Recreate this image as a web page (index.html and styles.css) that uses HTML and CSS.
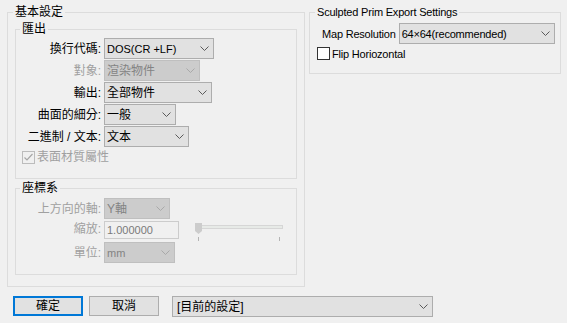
FILE: index.html
```html
<!DOCTYPE html>
<html lang="zh-Hant">
<head>
    <meta charset="UTF-8"/>
    <title>匯出設定</title>
    <link rel="stylesheet" href="styles.css">
</head>
<body>
<div class="dialog">
    <div class="top">
        <fieldset class="basic">
            <legend>基本設定</legend>

            <fieldset class="group export">
                <legend>匯出</legend>
                <div class="row">
                    <span class="label">換行代碼:</span>
                    <div class="combo w110">
                        <span class="latin">DOS(CR +LF)</span>
                        <svg class="chev" width="9" height="5" viewBox="0 0 9 5"><path d="M0.5 0.5 L4.5 4.5 L8.5 0.5"/></svg>
                    </div>
                </div>
                <div class="row off">
                    <span class="label">對象:</span>
                    <div class="combo w96">
                        <span>渲染物件</span>
                        <svg class="chev" width="9" height="5" viewBox="0 0 9 5"><path d="M0.5 0.5 L4.5 4.5 L8.5 0.5"/></svg>
                    </div>
                </div>
                <div class="row">
                    <span class="label">輸出:</span>
                    <div class="combo w108">
                        <span>全部物件</span>
                        <svg class="chev" width="9" height="5" viewBox="0 0 9 5"><path d="M0.5 0.5 L4.5 4.5 L8.5 0.5"/></svg>
                    </div>
                </div>
                <div class="row">
                    <span class="label">曲面的細分:</span>
                    <div class="combo w72">
                        <span>一般</span>
                        <svg class="chev" width="9" height="5" viewBox="0 0 9 5"><path d="M0.5 0.5 L4.5 4.5 L8.5 0.5"/></svg>
                    </div>
                </div>
                <div class="row">
                    <span class="label">二進制 / 文本:</span>
                    <div class="combo w85">
                        <span>文本</span>
                        <svg class="chev" width="9" height="5" viewBox="0 0 9 5"><path d="M0.5 0.5 L4.5 4.5 L8.5 0.5"/></svg>
                    </div>
                </div>
                <div class="check-row off">
                    <span class="box">
                        <svg width="11" height="11" viewBox="0 0 11 11"><path d="M1.5 5.5 L4 8 L9.5 2"/></svg>
                    </span>
                    <span>表面材質屬性</span>
                </div>
            </fieldset>

            <fieldset class="group coords">
                <legend>座標系</legend>
                <div class="row off">
                    <span class="label">上方向的軸:</span>
                    <div class="combo w66">
                        <span>Y軸</span>
                        <svg class="chev" width="9" height="5" viewBox="0 0 9 5"><path d="M0.5 0.5 L4.5 4.5 L8.5 0.5"/></svg>
                    </div>
                </div>
                <div class="row off scale-row">
                    <span class="label">縮放:</span>
                    <div class="textbox latin">1.000000</div>
                    <svg class="slider" width="90" height="20" viewBox="0 0 90 20">
                        <rect x="0.5" y="3.5" width="87" height="3" fill="#e7eae7" stroke="#d6d6d6"/>
                        <polygon points="0,1 7,1 7,9 3.5,12 0,9" fill="#cccccc"/>
                        <path d="M3.5 15 V19 M84.5 15 V19" stroke="#b4b4b4"/>
                    </svg>
                </div>
                <div class="row off">
                    <span class="label">單位:</span>
                    <div class="combo w71">
                        <span class="latin">mm</span>
                        <svg class="chev" width="9" height="5" viewBox="0 0 9 5"><path d="M0.5 0.5 L4.5 4.5 L8.5 0.5"/></svg>
                    </div>
                </div>
            </fieldset>
        </fieldset>

        <fieldset class="sculpt">
            <legend class="latin">Sculpted Prim Export Settings</legend>
            <div class="map-row">
                <span class="latin">Map Resolution</span>
                <div class="combo w156">
                    <span class="latin">64×64(recommended)</span>
                    <svg class="chev" width="9" height="5" viewBox="0 0 9 5"><path d="M0.5 0.5 L4.5 4.5 L8.5 0.5"/></svg>
                </div>
            </div>
            <div class="flip-row">
                <span class="box plain"></span>
                <span class="latin">Flip Horiozontal</span>
            </div>
        </fieldset>
    </div>

    <div class="footer">
        <button class="btn default">確定</button>
        <button class="btn">取消</button>
        <div class="combo preset">
            <span>[目前的設定]</span>
            <svg class="chev" width="9" height="5" viewBox="0 0 9 5"><path d="M0.5 0.5 L4.5 4.5 L8.5 0.5"/></svg>
        </div>
    </div>
</div>
</body>
</html>
```

FILE: styles.css
```css
* {
    margin: 0;
    padding: 0;
    box-sizing: border-box;
}

html body {
    width: 567px;
    height: 323px;
    overflow: hidden;
    background-color: #f0f0f0;
    color: #000;
    font-family: "Liberation Sans", "Noto Sans CJK TC", sans-serif;
    font-size: 12px;
    line-height: 16px;
}

.latin {
    font-size: 11px;
}

.dialog {
    padding: 4px 0 0 7px;
}

.top {
    display: flex;
    align-items: flex-start;
    gap: 4px;
}

fieldset {
    border: 1px solid #dcdcdc;
    min-width: 0;
}

/* outer group */
.basic {
    width: 298px;
    padding: 2px 7px 11px 7px;
}

.basic > legend {
    margin-left: -2px;
    padding: 0 2px;
    line-height: 16px;
}

.group {
    padding: 2px 0 12px 0;
}

.group > legend {
    margin-left: 4px;
    padding: 0 2px;
    line-height: 14px;
}

.coords {
    margin-top: 2px;
    padding: 3px 0 9px 0;
}

.row {
    display: flex;
    align-items: center;
    height: 21px;
    margin-bottom: 1px;
}

.coords .row {
    margin-bottom: 2px;
}

.coords .scale-row {
    height: 18px;
    margin-bottom: 3px;
    align-items: flex-start;
}

.label {
    width: 88px;
    padding-right: 3px;
    text-align: right;
    white-space: nowrap;
}

.off {
    color: #a0a0a0;
}

/* combo boxes */
.combo {
    display: flex;
    align-items: center;
    height: 21px;
    padding-left: 2px;
    background-color: #e1e1e1;
    border: 1px solid #adadad;
    white-space: nowrap;
    color: #000;
}

.combo .chev {
    margin-left: auto;
    margin-right: 4px;
    fill: none;
    stroke: #5a5a5a;
}

.off .combo {
    background-color: #cccccc;
    border-color: #bfbfbf;
    color: #838383;
}

.off .combo .chev {
    stroke: #a9a9a9;
}

.w66 { width: 66px; }
.w71 { width: 71px; }
.w72 { width: 72px; }
.w85 { width: 85px; }
.w96 { width: 96px; }
.w108 { width: 108px; }
.w110 { width: 110px; }
.w156 { width: 156px; }

.textbox {
    width: 75px;
    height: 18px;
    padding-left: 2px;
    line-height: 16px;
    border: 1px solid #cccccc;
    background-color: #f0f0f0;
    color: #7a7a7a;
}

.slider {
    margin-left: 16px;
    margin-top: 1px;
    overflow: visible;
}

/* checkboxes */
.check-row {
    display: flex;
    align-items: center;
    height: 18px;
    padding-left: 6px;
    gap: 2px;
}

.box {
    display: flex;
    align-items: center;
    justify-content: center;
    width: 13px;
    height: 13px;
    border: 1px solid #bcbcbc;
    background-color: #f0f0f0;
}

.box svg {
    fill: none;
    stroke: #a6a6a6;
    stroke-width: 1.2;
}

.box.plain {
    border-color: #333333;
    background-color: #fff;
}

/* right group */
.sculpt {
    width: 252px;
    padding: 3px 0 13px 0;
    letter-spacing: -0.2px;
}

.sculpt > legend {
    margin-left: 5px;
    padding: 0 2px;
    line-height: 16px;
}

.map-row {
    display: flex;
    align-items: center;
    gap: 3px;
    height: 21px;
    padding-left: 12px;
    margin-bottom: 3px;
}

.flip-row {
    display: flex;
    align-items: center;
    gap: 2px;
    height: 13px;
    padding-left: 7px;
}

/* bottom buttons */
.footer {
    display: flex;
    align-items: flex-start;
    margin-top: 9px;
    padding-left: 6px;
}

.btn {
    width: 70px;
    height: 20px;
    margin-right: 6px;
    font: inherit;
    line-height: 16px;
    background-color: #e1e1e1;
    border: 1px solid #adadad;
    color: #000;
}

.btn.default {
    border: 2px solid #0078d7;
}

.combo.preset {
    width: 261px;
    margin-left: 7px;
    padding-left: 4px;
}
```
